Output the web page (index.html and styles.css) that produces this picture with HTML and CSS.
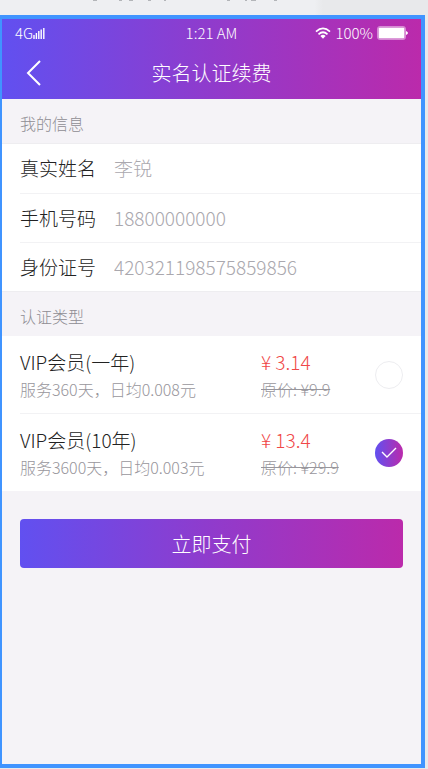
FILE: index.html
```html
<!DOCTYPE html>
<html lang="zh-CN">
<head>
<meta charset="utf-8">
<meta name="viewport" content="width=device-width, initial-scale=1">
<title>实名认证续费</title>
<link rel="stylesheet" href="styles.css">
</head>
<body>
<div class="canvas-strip">
  <svg width="200" height="2" viewBox="0 0 200 2" fill="none" stroke="#8c8d92" stroke-opacity=".6" aria-hidden="true"><path d="M13 .5H17M39 .5H42M49 .5H53M68 .5H71M84 .5H86M147 .5H150M165 .5H167M171 .5H176M194 .5H197"/></svg>
</div>
<main class="screen">
  <header class="header">
    <div class="status">
      <span class="status-left">4G<svg width="12" height="12" viewBox="0 0 12 12" fill="none" stroke="currentColor" stroke-width="1.4" aria-hidden="true"><path d="M1 12V8M3.4 12V6M5.8 12V4M8.2 12V2.5M10.8 12V1"/></svg></span>
      <span>1:21 AM</span>
      <span class="status-right">
        <svg width="16" height="12" viewBox="0 0 16 12" fill="none" stroke="currentColor" stroke-width="1.7" aria-hidden="true"><path d="M1 4.6Q8-1.8 15 4.6M3.5 7.3Q8 3.2 12.5 7.3"/><path d="M5.4 8.9Q8 6.8 10.6 8.9L8 11.8Z" fill="currentColor" stroke="none"/></svg>
        100%
        <svg width="31" height="14" viewBox="0 0 31 14" aria-hidden="true"><rect x=".6" y=".6" width="27.8" height="12.8" rx="2" fill="none" stroke="currentColor" stroke-opacity=".5"/><rect x="1.5" y="1.5" width="26" height="11" rx="1" fill="currentColor"/><path d="M29 5Q31 6 31 7T29 9Z" fill="currentColor"/></svg>
      </span>
    </div>
    <div class="navbar">
      <button class="back" type="button" aria-label="返回">
        <svg width="16" height="26" viewBox="0 0 16 26" fill="none" stroke="currentColor" stroke-width="2" aria-hidden="true"><path d="M14 1L2 13L14 25"/></svg>
      </button>
      <h1 class="title">实名认证续费</h1>
    </div>
  </header>
  <form>
    <h2 class="section-title">我的信息</h2>
    <div class="fields">
      <div class="field"><label for="name">真实姓名</label><input id="name" type="text" value="李锐"></div>
      <div class="field"><label for="phone">手机号码</label><input id="phone" type="tel" value="18800000000"></div>
      <div class="field"><label for="idcard">身份证号</label><input id="idcard" type="text" value="420321198575859856"></div>
    </div>
    <h2 class="section-title">认证类型</h2>
    <div class="plans">
      <label class="plan">
        <span class="plan-info"><span class="plan-name">VIP会员(一年)</span><span class="note">服务360天，日均0.008元</span></span>
        <span class="plan-cost"><span class="price">¥ 3.14</span><del class="note">原价: ¥9.9</del></span>
        <input class="radio" type="radio" name="plan">
      </label>
      <label class="plan">
        <span class="plan-info"><span class="plan-name">VIP会员(10年)</span><span class="note">服务3600天，日均0.003元</span></span>
        <span class="plan-cost"><span class="price">¥ 13.4</span><del class="note">原价: ¥29.9</del></span>
        <span class="choice">
          <input class="radio" type="radio" name="plan" checked>
          <svg class="tick" width="16" height="12" viewBox="0 0 16 12" fill="none" stroke="currentColor" stroke-width="1.4" aria-hidden="true"><path d="M1 5L6 10L15 1"/></svg>
        </span>
      </label>
    </div>
    <button class="pay" type="button">立即支付</button>
  </form>
</main>
</body>
</html>
```
FILE: styles.css
```css
* { box-sizing: border-box; }

body {
  display: flex;
  flex-direction: column;
  min-height: 100vh;
  margin: 0;
  padding: 0 3px 1px 0;
  background: #e8e9eb;
  font-family: "Noto Sans CJK SC", sans-serif;
  font-weight: 300;
}

h1, h2 { margin: 0; font-weight: 300; }

button, input { font: inherit; }

.canvas-strip {
  display: flex;
  align-items: flex-start;
  height: 15px;
  padding-left: 80px;
  background: linear-gradient(90deg, #eeeff2 74%, #e8e9eb 76%);
}

.screen {
  flex: 1;
  border: 4px solid #4094ff;
  border-left-width: 2px;
  background: #f5f3f7;
}

.header {
  height: 80px;
  background: linear-gradient(90deg, #6150f0, #903bcc 50%, #bb2aab);
  color: #fff;
}

.status {
  display: grid;
  grid-template-columns: 1fr auto 1fr;
  align-items: center;
  height: 28px;
  padding: 0 13px;
  font-size: 15px;
  line-height: 28px;
}

.status-left, .status-right {
  display: flex;
  align-items: center;
}

.status-right { justify-content: flex-end; gap: 4px; }

.navbar {
  display: grid;
  grid-template-columns: 64px 1fr 64px;
  align-items: center;
  height: 52px;
}

.back {
  display: flex;
  justify-content: center;
  padding: 0;
  border: 0;
  background: none;
  color: inherit;
}

.title {
  font-size: 20px;
  line-height: 52px;
  text-align: center;
}

.section-title {
  padding: 4px 18px 0;
  color: #8f8d93;
  font-size: 16px;
  line-height: 40px;
}

.fields, .plans { background: #fff; }

.fields { border-block: 1px solid #eeedf0; }

.field {
  display: flex;
  align-items: center;
  height: 49px;
  margin-left: 18px;
  padding-bottom: 2px;
  font-size: 19px;
}

.field + .field, .plan + .plan { border-top: 1px solid #f2f2f4; }

.field label { width: 94px; color: #222; }

.field input {
  flex: 1;
  min-width: 0;
  padding: 0;
  border: 0;
  background: none;
  color: #aaa8ae;
}

.plan {
  display: grid;
  grid-template-columns: 241px 1fr 28px;
  align-items: center;
  height: 77px;
  margin-left: 18px;
  padding-right: 18px;
}

.plan + .plan { height: 78px; }

.plan-info, .plan-cost { display: grid; }

.plan-name, .price { font-size: 19px; line-height: 28px; }

.plan-name { color: #222; }

.price { color: #f04848; }

.note { color: #98969c; font-size: 16px; line-height: 26px; }

.choice { display: grid; place-items: center; }

.choice > * { grid-area: 1 / 1; }

.radio {
  width: 28px;
  height: 28px;
  margin: 0;
  border: 1px solid #ededf0;
  border-radius: 50%;
  appearance: none;
}

.radio:checked {
  border: 0;
  background: linear-gradient(90deg, #6150f0, #bb2aab);
}

.tick { z-index: 1; color: #fff; }

.pay {
  display: block;
  width: calc(100% - 36px);
  height: 49px;
  margin: 28px 18px;
  padding: 0;
  border: 0;
  border-radius: 4px;
  background: linear-gradient(90deg, #6150f0, #903bcc 50%, #bb2aab);
  color: #fff;
  font-size: 20px;
}
```
